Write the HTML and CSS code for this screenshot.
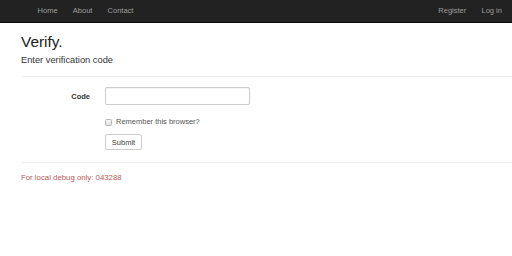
FILE: index.html
```html
<!DOCTYPE html>
<html lang="en">
<head>
    <meta charset="UTF-8">
    <meta name="viewport" content="width=device-width, initial-scale=1.0">
    <title>Verify</title>
    <link rel="stylesheet" href="styles.css">
</head>
<body>
    <nav class="navbar">
        <ul class="nav">
            <li><a href="#">Home</a></li>
            <li><a href="#">About</a></li>
            <li><a href="#">Contact</a></li>
        </ul>
        <ul class="nav">
            <li><a href="#">Register</a></li>
            <li><a href="#">Log in</a></li>
        </ul>
    </nav>

    <div class="container">
        <h2 class="title">Verify.</h2>
        <h4 class="subtitle">Enter verification code</h4>
        <hr>

        <form class="form">
            <div class="form-row">
                <label class="form-label" for="code">Code</label>
                <input class="form-input" type="text" id="code">
            </div>
            <div class="form-row offset check-row">
                <label class="check"><input type="checkbox" id="remember"> Remember this browser?</label>
            </div>
            <div class="form-row offset button-row">
                <button type="button" class="btn">Submit</button>
            </div>
        </form>

        <hr class="bottom-hr">
        <p class="debug">For local debug only: 043288</p>
    </div>
</body>
</html>
```

FILE: styles.css
```css
body {
    margin: 0;
    font-family: "Liberation Sans", Arial, sans-serif;
    font-size: 7.5px;
    color: #333;
    background-color: #fff;
}

.navbar {
    display: flex;
    justify-content: space-between;
    height: 22px;
    padding: 0 2.5px 0 30px;
    background-color: #222;
    border-bottom: 1px solid #080808;
}

.nav {
    display: flex;
    list-style: none;
    margin: 0;
    padding: 0;
}

.nav a {
    display: block;
    padding: 0 7.6px;
    line-height: 22px;
    color: #9d9d9d;
    text-decoration: none;
}

.container {
    padding-left: 21px;
}

.title {
    margin: 10px 0 0;
    font-size: 15.4px;
    font-weight: normal;
    line-height: 17px;
    color: #222;
}

.subtitle {
    margin: 5px 0 0;
    font-size: 9.3px;
    font-weight: normal;
    line-height: 11px;
}

hr {
    margin: 10px 0 0;
    border: 0;
    border-top: 1px solid #eee;
}

.form-row {
    display: flex;
    align-items: center;
    margin-top: 10px;
}

.form-row.offset {
    padding-left: 84px;
}

.form-label {
    width: 69px;
    margin-right: 15px;
    text-align: right;
    font-weight: bold;
    color: #333;
}

.form-input {
    box-sizing: border-box;
    width: 145px;
    height: 18px;
    margin: 0;
    border: 1px solid #ccc;
    border-radius: 2px;
    box-shadow: inset 0 1px 1px rgba(0, 0, 0, 0.05);
}

.check-row {
    margin-top: 12px;
    line-height: 10px;
}

.check {
    display: flex;
    align-items: center;
    color: #555;
}

.check input {
    appearance: none;
    box-sizing: border-box;
    width: 7px;
    height: 7px;
    margin: 0 4px 0 0;
    border: 1px solid #b5b5b5;
    border-radius: 1.5px;
    background: linear-gradient(#f7f7f7, #dedede);
}

.button-row {
    margin-top: 7px;
}

.btn {
    box-sizing: border-box;
    width: 37px;
    height: 16px;
    padding: 0;
    font-family: inherit;
    font-size: 7.5px;
    color: #444;
    background-color: #fff;
    border: 1px solid #ccc;
    border-radius: 2px;
}

.bottom-hr {
    margin-top: 12px;
}

.debug {
    margin: 10px 0 0;
    line-height: 10px;
    font-size: 7.8px;
    color: #b65a5a;
}
```
